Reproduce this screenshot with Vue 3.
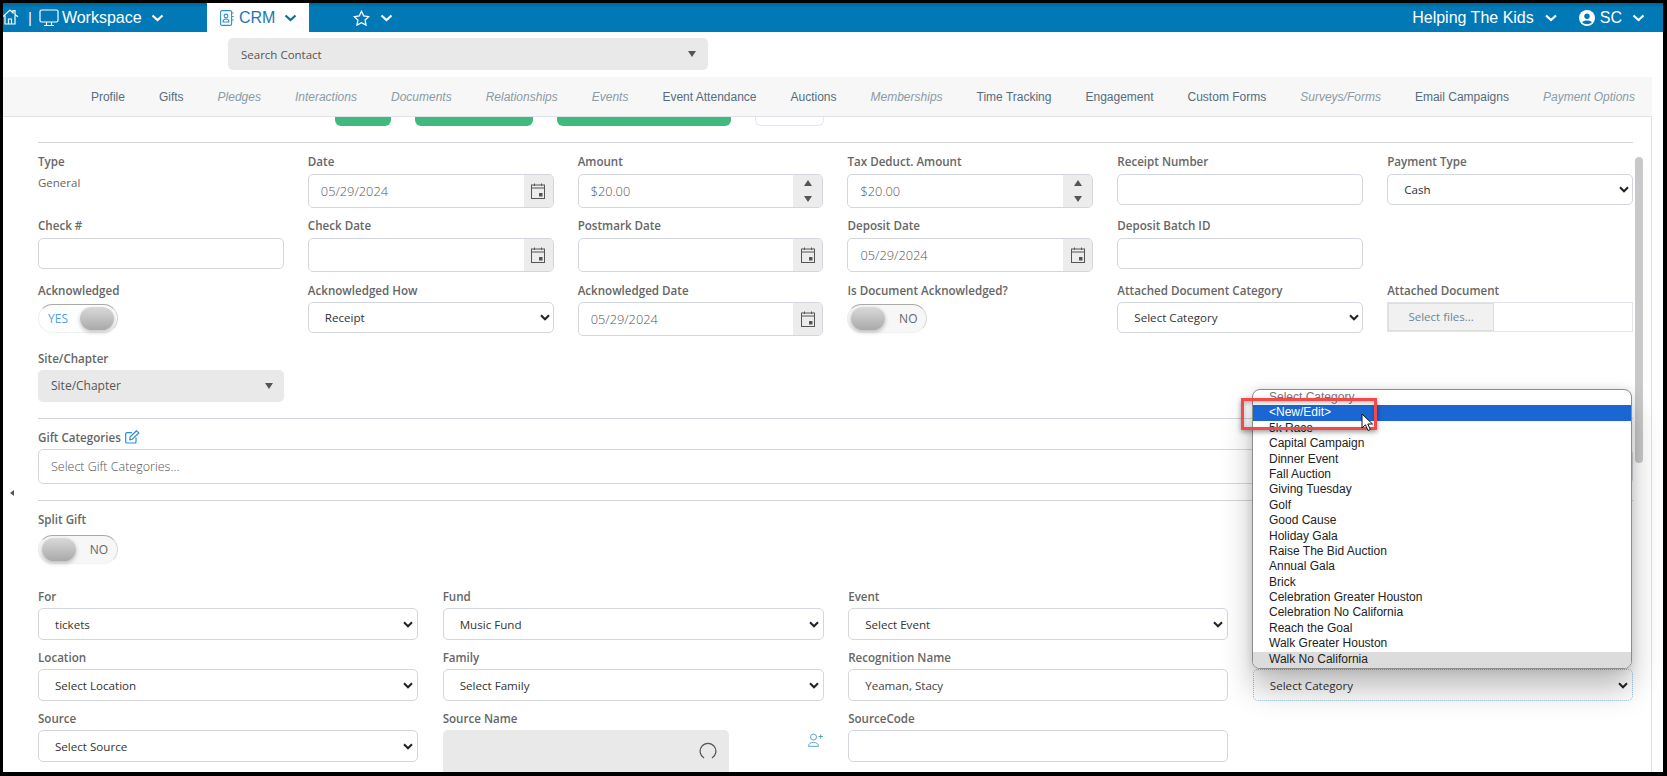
<script setup>
const navItems = [
  { label: "Profile" },
  { label: "Gifts" },
  { label: "Pledges", off: true },
  { label: "Interactions", off: true },
  { label: "Documents", off: true },
  { label: "Relationships", off: true },
  { label: "Events", off: true },
  { label: "Event Attendance" },
  { label: "Auctions" },
  { label: "Memberships", off: true },
  { label: "Time Tracking" },
  { label: "Engagement" },
  { label: "Custom Forms" },
  { label: "Surveys/Forms", off: true },
  { label: "Email Campaigns" },
  { label: "Payment Options", off: true },
];

const topFields = [
  { label: "Type", kind: "static", value: "General" },
  { label: "Date", kind: "date", value: "05/29/2024" },
  { label: "Amount", kind: "spin", value: "$20.00" },
  { label: "Tax Deduct. Amount", kind: "spin", value: "$20.00" },
  { label: "Receipt Number", kind: "input" },
  { label: "Payment Type", kind: "select", value: "Cash" },
  { label: "Check #", kind: "input" },
  { label: "Check Date", kind: "date" },
  { label: "Postmark Date", kind: "date" },
  { label: "Deposit Date", kind: "date", value: "05/29/2024" },
  { label: "Deposit Batch ID", kind: "input" },
  { kind: "empty" },
  { label: "Acknowledged", kind: "toggle", on: true },
  { label: "Acknowledged How", kind: "select", value: "Receipt" },
  { label: "Acknowledged Date", kind: "date", value: "05/29/2024" },
  { label: "Is Document Acknowledged?", kind: "toggle" },
  { label: "Attached Document Category", kind: "select", value: "Select Category" },
  { label: "Attached Document", kind: "file" },
];

const bottomFields = [
  { label: "For", kind: "select", value: "tickets" },
  { label: "Fund", kind: "select", value: "Music Fund" },
  { label: "Event", kind: "select", value: "Select Event" },
  { kind: "category" },
  { label: "Location", kind: "select", value: "Select Location" },
  { label: "Family", kind: "select", value: "Select Family" },
  { label: "Recognition Name", kind: "input", value: "Yeaman, Stacy" },
  { kind: "category", focused: true },
  { label: "Source", kind: "select", value: "Select Source" },
  { label: "Source Name", kind: "source" },
  { label: "SourceCode", kind: "input" },
  { kind: "empty" },
];

const categories = [
  "Select Category",
  "<New/Edit>",
  "5k Race",
  "Capital Campaign",
  "Dinner Event",
  "Fall Auction",
  "Giving Tuesday",
  "Golf",
  "Good Cause",
  "Holiday Gala",
  "Raise The Bid Auction",
  "Annual Gala",
  "Brick",
  "Celebration Greater Houston",
  "Celebration No California",
  "Reach the Goal",
  "Walk Greater Houston",
  "Walk No California",
];
</script>

<template>
  <div class="frame">
    <header class="topbar">
      <div class="top-left">
        <svg class="home" width="16" height="18" viewBox="0 0 16 18" fill="none" stroke="#fff" stroke-width="1.2">
          <path d="M0 8.5 7 2l3 2.8V2.6h2v4l3 2.2M2 7.500V16h10V7.500M5.500 16v-5h3v5" />
        </svg>
        <span class="pipe">|</span>
        <svg class="monitor" width="20" height="18" viewBox="0 0 20 18" fill="none" stroke="#fff" stroke-width="1.2">
          <rect x="1" y="1" width="18" height="12" rx="1.5" />
          <path d="M7.500 13v3M12.500 13v3M5 16.500h10" />
        </svg>
        <span class="top-text">Workspace</span>
        <svg class="chev" width="13" height="8" viewBox="0 0 13 8"><path d="M1.500 1.500 6.500 6l5-4.500" fill="none" stroke="#fff" stroke-width="2.2" /></svg>
      </div>
      <div class="crm-tab">
        <svg width="14" height="16" viewBox="0 0 14 16" fill="none" stroke="#2d8fd0" stroke-width="1.1">
          <rect x="0.6" y="0.6" width="11" height="14.8" rx="1.5" />
          <circle cx="6" cy="6" r="1.9" />
          <path d="M3 12c0-4 6-4 6 0zM12 3h1.600M12 6.500h1.600M12 10h1.600" />
        </svg>
        <span class="crm-text">CRM</span>
        <svg class="chev" width="13" height="8" viewBox="0 0 13 8"><path d="M1.500 1.500 6.500 6l5-4.500" fill="none" stroke="#0a6ea8" stroke-width="2.2" /></svg>
      </div>
      <div class="fav">
        <svg width="17" height="16" viewBox="0 0 17 16" fill="none" stroke="#fff" stroke-width="1.3">
          <path d="m8.500 1.300 2.200 4.600 5 .7-3.600 3.500.9 5-4.500-2.400L4 15.100l.9-5L1.300 6.600l5-.7z" />
        </svg>
        <svg class="chev" width="13" height="8" viewBox="0 0 13 8"><path d="M1.500 1.500 6.500 6l5-4.500" fill="none" stroke="#fff" stroke-width="2.2" /></svg>
      </div>
      <div class="top-right">
        <span class="top-text">Helping The Kids</span>
        <svg class="chev" width="14" height="8" viewBox="0 0 13 8"><path d="M1.500 1.500 6.500 6l5-4.500" fill="none" stroke="#fff" stroke-width="2.2" /></svg>
        <svg class="user" width="16" height="16" viewBox="0 0 16 16">
          <circle cx="8" cy="8" r="8" fill="#fff" />
          <circle cx="8" cy="6.200" r="2.700" fill="#0079b6" />
          <path d="M3.200 12.400c1-2.600 8.600-2.600 9.600 0-2.600 2.300-7 2.300-9.600 0z" fill="#0079b6" />
        </svg>
        <span class="top-text sc">SC</span>
        <svg class="chev" width="13" height="8" viewBox="0 0 13 8"><path d="M1.500 1.500 6.500 6l5-4.500" fill="none" stroke="#fff" stroke-width="2.2" /></svg>
      </div>
    </header>

    <div class="search-row">
      <div class="search-box">
        <span>Search Contact</span>
        <i class="tri-down"></i>
      </div>
    </div>

    <nav class="tabs">
      <a v-for="item in navItems" :key="item.label" :class="{ off: item.off }">{{ item.label }}</a>
    </nav>

    <main class="panel">
      <div class="actions">
        <span class="btn w56"></span>
        <span class="btn w118"></span>
        <span class="btn w174"></span>
        <span class="btn ghost"></span>
      </div>
      <hr class="first" />

      <section class="grid six">
        <div v-for="(f, i) in topFields" :key="i" class="field">
          <template v-if="f.kind !== 'empty'">
            <label>{{ f.label }}</label>
            <p v-if="f.kind === 'static'" class="static">{{ f.value }}</p>
            <div v-else-if="f.kind === 'input'" class="ctl">{{ f.value }}</div>
            <div v-else-if="f.kind === 'select'" class="ctl select">
              <span>{{ f.value }}</span>
              <svg width="10" height="7" viewBox="0 0 10 7"><path d="M1 1.300 5 5.300l4-4" fill="none" stroke="#222" stroke-width="2" /></svg>
            </div>
            <div v-else-if="f.kind === 'date'" class="ctl addon-ctl">
              <span class="val">{{ f.value }}</span>
              <span class="addon">
                <svg width="14" height="16" viewBox="0 0 14 16" fill="none" stroke="#555" stroke-width="1">
                  <rect x="0.500" y="2" width="13" height="13.500" />
                  <path d="M0.500 5h13M3.500 0.500v2.500M10.500 0.500v2.500" />
                  <rect x="8" y="10" width="3.500" height="3.500" fill="#555" stroke="none" />
                </svg>
              </span>
            </div>
            <div v-else-if="f.kind === 'spin'" class="ctl addon-ctl">
              <span class="val">{{ f.value }}</span>
              <span class="addon spin"><i class="tri-up"></i><i class="tri-down"></i></span>
            </div>
            <div v-else-if="f.kind === 'toggle'" class="toggle" :class="{ on: f.on }">
              <span class="knob"></span>
              <span class="state">{{ f.on ? "YES" : "NO" }}</span>
            </div>
            <div v-else-if="f.kind === 'file'" class="file">
              <span class="file-btn">Select files...</span>
            </div>
          </template>
        </div>
      </section>

      <div class="field site">
        <label>Site/Chapter</label>
        <div class="site-box">
          <span>Site/Chapter</span>
          <i class="tri-down"></i>
        </div>
      </div>
      <hr class="after-site" />

      <div class="field gift">
        <label>
          Gift Categories
          <svg class="edit" width="15" height="14" viewBox="0 0 15 14" fill="none" stroke="#2b8fd2" stroke-width="1.2">
            <path d="M11 7.500v4.200a1.300 1.300 0 0 1-1.300 1.300H2a1.300 1.300 0 0 1-1.300-1.300V3.900A1.300 1.300 0 0 1 2 2.600h5" />
            <path d="m5 7 6.500-6.300 2.300 2.200L7.300 9.300 4.800 9.700z" />
          </svg>
        </label>
        <div class="ctl tall placeholder">Select Gift Categories...</div>
      </div>
      <hr class="after-gift" />

      <div class="field split">
        <label>Split Gift</label>
        <div class="toggle"><span class="knob"></span><span class="state">NO</span></div>
      </div>

      <section class="grid four">
        <div v-for="(f, i) in bottomFields" :key="i" class="field">
          <template v-if="f.kind === 'select'">
            <label>{{ f.label }}</label>
            <div class="ctl select wide">
              <span>{{ f.value }}</span>
              <svg width="10" height="7" viewBox="0 0 10 7"><path d="M1 1.300 5 5.300l4-4" fill="none" stroke="#222" stroke-width="2" /></svg>
            </div>
          </template>
          <template v-else-if="f.kind === 'input'">
            <label>{{ f.label }}</label>
            <div class="ctl name">{{ f.value }}</div>
          </template>
          <template v-else-if="f.kind === 'source'">
            <label>{{ f.label }}</label>
            <div class="source-wrap">
              <div class="source-box">
                <svg width="18" height="18" viewBox="0 0 16 16" fill="none" stroke="#555" stroke-width="1.100">
                  <path d="M4.500 14.200A7 7 0 1 1 11.500 14.200" />
                </svg>
              </div>
              <svg class="add-user" width="17" height="14" viewBox="0 0 17 14" fill="none" stroke="#4a9bc9" stroke-width="0.9">
                <circle cx="6.500" cy="4" r="3" />
                <path d="M1.500 13.300c0-5.300 10-5.300 10 0zM11.500 3.500h4.500M13.700 1.300v4.500" />
              </svg>
            </div>
          </template>
          <template v-else-if="f.kind === 'category' && f.focused">
            <label class="hidden-label">Category</label>
            <div class="ctl select wide focused">
              <span>Select Category</span>
              <svg width="10" height="7" viewBox="0 0 10 7"><path d="M1 1.300 5 5.300l4-4" fill="none" stroke="#222" stroke-width="2" /></svg>
            </div>
          </template>
        </div>
      </section>

      <i class="collapse"></i>
      <div class="scroll-thumb"></div>
    </main>

    <ul class="dropdown">
      <li
        v-for="(c, i) in categories"
        :key="c"
        :class="{ first: i === 0, active: i === 1, last: i === categories.length - 1 }"
      >{{ c }}</li>
    </ul>

    <div class="callout"></div>
    <svg class="cursor" width="13" height="19" viewBox="0 0 13 19">
      <path d="M1 1v14l3.400-3.200L7 17.500l2.300-1L6.800 11H11.500z" fill="#fff" stroke="#111" stroke-width="1" />
    </svg>
  </div>
</template>

<style>
html,
body {
  margin: 0;
  overflow: hidden;
}
</style>

<style scoped>
* {
  box-sizing: border-box;
}

.frame {
  position: relative;
  width: 1667px;
  height: 776px;
  overflow: hidden;
  background: #fff;
  border-style: solid;
  border-color: #000;
  border-width: 3px 4px 4px 3px;
  font-family: "Open Sans", "Liberation Sans", sans-serif;
  font-size: 12px;
  color: #666;
}

/* top bar */
.topbar {
  display: flex;
  align-items: center;
  height: 29px;
  background: linear-gradient(#00628f 0, #0079b6 4px);
  color: #fff;
  font-family: "Liberation Sans", Arial, sans-serif;
  font-size: 16px;
}

.top-left {
  display: flex;
  align-items: center;
  width: 204px;
}

.home {
  margin-top: -1px;
}

.pipe {
  margin-left: 9px;
  font-size: 15px;
}

.monitor {
  margin-left: 7px;
}

.top-text {
  margin-left: 3px;
}

.top-left .chev {
  margin-left: 9px;
}

.crm-tab {
  display: flex;
  align-items: center;
  width: 102px;
  height: 29px;
  padding-left: 13px;
  background: #fff;
  color: #1a78b4;
}

.crm-text {
  margin-left: 5px;
}

.crm-tab .chev {
  margin-left: 9px;
}

.fav {
  display: flex;
  align-items: center;
  gap: 10px;
  margin-left: 44px;
}

.top-right {
  display: flex;
  align-items: center;
  margin-left: auto;
  padding-right: 18px;
}

.top-right .chev {
  margin-left: 10px;
}

.user {
  margin-left: 21px;
}

.sc {
  margin-left: 5px;
}

/* contact search */
.search-row {
  height: 45px;
  padding: 6px 0 0 225px;
}

.search-box {
  display: flex;
  align-items: center;
  justify-content: space-between;
  width: 480px;
  height: 32px;
  padding: 0 12px 0 13px;
  background: #e9e9e9;
  border-radius: 5px;
  font-size: 11.5px;
  color: #555;
}

.tri-down,
.tri-up {
  display: block;
  width: 0;
  height: 0;
  border-left: 4px solid transparent;
  border-right: 4px solid transparent;
}

.tri-down {
  border-top: 6px solid #555;
}

.tri-up {
  border-bottom: 6px solid #555;
}

/* tabs */
.tabs {
  display: flex;
  align-items: center;
  justify-content: flex-end;
  gap: 34px;
  width: 1649px;
  height: 40px;
  padding-right: 17px;
  background: #f7f7f7;
  border-bottom: 1px solid #dfe0e8;
  font-family: "Liberation Sans", Arial, sans-serif;
  font-size: 12px;
  color: #566d7c;
}

.tabs .off {
  font-style: italic;
  color: #8b9ba5;
}

/* form panel */
.panel {
  position: relative;
  width: 1649px;
  height: 660px;
  padding: 0 18px 0 35px;
  border-right: 1px solid #dfe0e8;
}

.actions {
  display: flex;
  gap: 24px;
  height: 9px;
  padding-left: 297px;
}

.btn {
  height: 9px;
  background: #3fba7c;
  border-radius: 0 0 6px 6px;
}

.w56 {
  width: 56px;
}

.w118 {
  width: 118px;
}

.w174 {
  width: 174px;
}

.ghost {
  width: 69px;
  background: #fff;
  border: 1px solid #e6e7ec;
  border-top: 0;
}

hr {
  height: 1px;
  margin: 0;
  border: 0;
  background: #d3d4d9;
}

hr.first {
  margin-top: 16px;
}

hr.after-site {
  margin-top: 16px;
}

hr.after-gift {
  margin-top: 16px;
}

.grid {
  display: grid;
}

.six {
  grid-template-columns: repeat(6, 1fr);
  grid-auto-rows: 54px;
  gap: 10.3px 24px;
  margin-top: 11px;
}

.four {
  grid-template-columns: repeat(4, 1fr);
  grid-auto-rows: 51px;
  gap: 10px 24.5px;
  margin-top: 25px;
}

.field label {
  display: block;
  height: 16px;
  margin-bottom: 3.5px;
  line-height: 16px;
  font-size: 11.6px;
  font-weight: 600;
  color: #666;
  white-space: nowrap;
}

.hidden-label {
  visibility: hidden;
}

.static {
  margin: 0;
  padding-top: 1px;
  line-height: 16px;
  font-size: 11.5px;
  color: #666;
}

.ctl {
  display: flex;
  align-items: center;
  height: 31.4px;
  padding: 0 12px;
  background: #fff;
  border: 1px solid #d3d6dc;
  border-radius: 5px;
  font-size: 11.6px;
  color: #555;
}

.select {
  justify-content: space-between;
  padding: 0 3px 0 16px;
  color: #333;
}

.select.wide {
  padding: 0 4px 0 16px;
}

.focused {
  border: 1px dotted #8fbfd6;
  background: transparent;
}

.name {
  padding-left: 16px;
  color: #444;
}

.addon-ctl {
  height: 34.4px;
  padding: 0;
  overflow: hidden;
}

.val {
  flex: 1;
  padding-left: 12px;
  font-size: 12.8px;
  font-weight: 300;
  color: #555;
}

.addon {
  display: flex;
  align-items: center;
  justify-content: center;
  width: 29px;
  height: 100%;
  background: #ececec;
}

.spin {
  flex-direction: column;
  gap: 10px;
}

.tall {
  height: 34.4px;
}

.placeholder {
  font-size: 12.5px;
  font-weight: 300;
  color: #555;
}

/* switch */
.toggle {
  display: flex;
  align-items: center;
  justify-content: space-between;
  width: 80px;
  height: 29px;
  padding: 0 9px 0 3px;
  background: #f7f7f7;
  border: 1px solid #d8d8d8;
  border-top-color: #aaa;
  border-left-color: #eee;
  border-bottom-color: #f2f2f2;
  border-radius: 15px;
  color: #666;
}

.six .toggle {
  margin-top: 5px;
}

.toggle.on {
  flex-direction: row-reverse;
  padding: 0 3px 0 9px;
  background: #fff;
  color: #4da3e8;
}

.knob {
  width: 34px;
  height: 23px;
  background: linear-gradient(#d9d9d9, #a9a9a9);
  border-radius: 12px;
  box-shadow: 0 2px 4px rgba(0, 0, 0, 0.25);
}

.state {
  font-size: 12px;
}

.file {
  height: 29.5px;
  border: 1px solid #e3e4ea;
}

.file-btn {
  display: flex;
  align-items: center;
  justify-content: center;
  width: 106px;
  height: 100%;
  background: #f1f1f1;
  border: 1px solid #ddd;
  font-size: 11.5px;
  color: #6d8795;
}

.site {
  width: 246px;
  margin-top: 14.4px;
}

.site label {
  margin-bottom: 3px;
}

.site-box {
  display: flex;
  align-items: center;
  justify-content: space-between;
  height: 31.7px;
  padding: 0 11px 0 13px;
  background: #e9e9e9;
  border-radius: 5px;
  font-size: 12px;
  color: #555;
}

.gift {
  margin-top: 11px;
}

.edit {
  margin-left: 1px;
  vertical-align: -2px;
}

.split {
  margin-top: 11px;
}

.split label {
  margin-bottom: 7.3px;
}

.source-wrap {
  display: flex;
  align-items: flex-start;
}

.source-box {
  display: flex;
  align-items: center;
  justify-content: flex-end;
  flex: none;
  width: 286px;
  height: 48px;
  padding: 0 12px 6px 0;
  background: #e9e9e9;
  border-radius: 5px;
}

.add-user {
  margin: 3px 0 0 78px;
}

/* overlays */
.collapse {
  position: absolute;
  top: 373px;
  left: 7px;
  border-top: 3px solid transparent;
  border-bottom: 3px solid transparent;
  border-right: 4px solid #555;
}

.scroll-thumb {
  position: absolute;
  top: 40px;
  left: 1632px;
  width: 8px;
  height: 306px;
  background: #c9c9c9;
  border-radius: 4px;
}

.dropdown {
  position: absolute;
  top: 386px;
  left: 1249px;
  width: 380px;
  height: 280px;
  margin: 0;
  padding: 0;
  overflow: hidden;
  list-style: none;
  background: #fff;
  border: 1px solid #8d8d8d;
  border-radius: 8px;
  box-shadow: 0 20px 30px rgba(0, 0, 0, 0.26), 0 0 10px rgba(0, 0, 0, 0.12);
  font-family: "Liberation Sans", Arial, sans-serif;
  font-size: 12px;
  color: #222;
}

.dropdown li {
  height: 15.4px;
  padding-left: 16px;
  line-height: 15.4px;
  white-space: nowrap;
}

.dropdown li.first {
  color: #777;
}

.dropdown li.active {
  background: #1a66d2;
  color: #fff;
}

.dropdown li.last {
  height: 17px;
  background: #dcdcdc;
}

.callout {
  position: absolute;
  top: 395px;
  left: 1238px;
  width: 136px;
  height: 32px;
  border: 3px solid #f24a4a;
  box-shadow: 0 2px 5px rgba(0, 0, 0, 0.4), inset 0 2px 4px rgba(0, 0, 0, 0.25);
}

.cursor {
  position: absolute;
  top: 410px;
  left: 1358px;
}
</style>
